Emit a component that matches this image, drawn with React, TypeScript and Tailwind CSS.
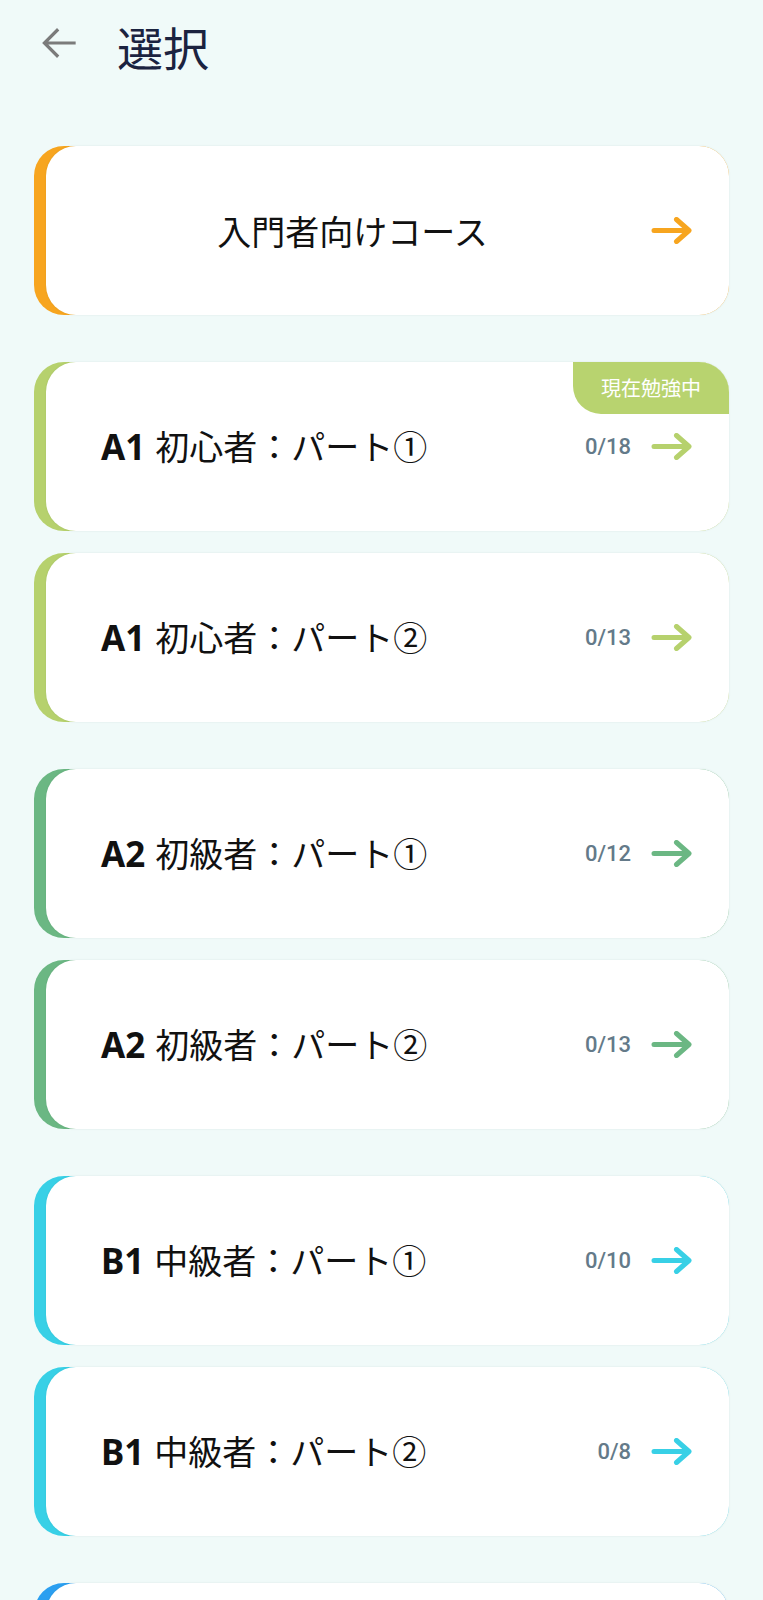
import { ReactNode } from "react";

interface CardProps {
  stripe: string;
  arrow: string;
  title?: ReactNode;
  count?: string;
  badge?: string;
  center?: boolean;
}

function Arrow({ color }: { color: string }) {
  return (
    <svg width="41" height="27" viewBox="0 0 41 27" className={color} fill="none">
      <path
        d="M3 13.5H37M25.5 2.5L38 13.5L25.5 24.5"
        stroke="currentColor"
        strokeWidth="5"
        strokeLinecap="round"
        strokeLinejoin="round"
      />
    </svg>
  );
}

function CourseCard({ stripe, arrow, title, count, badge, center }: CardProps) {
  return (
    <div className={`rounded-[30px] ${stripe}`}>
      <div
        className={`relative ml-[12px] flex h-[169px] items-center rounded-[30px] bg-white pr-[37px] shadow-[0_0_2px_rgba(40,80,70,0.12)] ${
          center ? "pl-[20px]" : "pl-[55px]"
        }`}
      >
        {badge && (
          <div className="absolute right-0 top-0 flex h-[52px] w-[156px] items-center justify-center rounded-bl-[28px] rounded-tr-[30px] bg-[#b8d36f] text-[20px] text-white">
            {badge}
          </div>
        )}
        <div
          className={`flex-1 text-[34px] font-normal leading-none text-[#111] ${
            center ? "mr-[12px] text-center" : ""
          }`}
        >
          {title}
        </div>
        {count && (
          <span className="mr-[20px] font-['Roboto'] text-[22px] font-medium text-[#647a89]">
            {count}
          </span>
        )}
        <Arrow color={arrow} />
      </div>
    </div>
  );
}

function Level({ code, name }: { code: string; name: string }) {
  return (
    <>
      <span className="mr-[10px] font-['Noto_Sans'] text-[35px] font-bold">{code}</span>
      {name}
    </>
  );
}

export default function App() {
  return (
    <div className="min-h-screen bg-[#f0faf9] pb-10 font-['Noto_Sans_CJK_JP',sans-serif]">
      <header className="flex items-start pl-[34px] pt-[18px]">
        <svg width="50" height="50" viewBox="0 0 24 24" className="text-[#7b7b7b]" fill="none">
          <path
            d="M20 12H5.2M11.6 5.4L5 12l6.6 6.6"
            stroke="currentColor"
            strokeWidth="1.55"
          />
        </svg>
        <h1 className="ml-[33px] text-[46px] font-normal leading-[56px] text-[#1b2340]">
          選択
        </h1>
      </header>

      <div className="mx-[34px] mt-[72px] flex flex-col gap-[47px]">
        <CourseCard
          stripe="bg-[#f7a51f]"
          arrow="text-[#f7a51f]"
          title="入門者向けコース"
          center
        />

        <div className="flex flex-col gap-[22px]">
          <CourseCard
            stripe="bg-[#b6d16d]"
            arrow="text-[#b6d16d]"
            title={<Level code="A1" name="初心者：パート①" />}
            count="0/18"
            badge="現在勉強中"
          />
          <CourseCard
            stripe="bg-[#b6d16d]"
            arrow="text-[#b6d16d]"
            title={<Level code="A1" name="初心者：パート②" />}
            count="0/13"
          />
        </div>

        <div className="flex flex-col gap-[22px]">
          <CourseCard
            stripe="bg-[#6bb783]"
            arrow="text-[#6bb783]"
            title={<Level code="A2" name="初級者：パート①" />}
            count="0/12"
          />
          <CourseCard
            stripe="bg-[#6bb783]"
            arrow="text-[#6bb783]"
            title={<Level code="A2" name="初級者：パート②" />}
            count="0/13"
          />
        </div>

        <div className="flex flex-col gap-[22px]">
          <CourseCard
            stripe="bg-[#38d0e6]"
            arrow="text-[#38d0e6]"
            title={<Level code="B1" name="中級者：パート①" />}
            count="0/10"
          />
          <CourseCard
            stripe="bg-[#38d0e6]"
            arrow="text-[#38d0e6]"
            title={<Level code="B1" name="中級者：パート②" />}
            count="0/8"
          />
        </div>

        <CourseCard stripe="bg-[#2b9ff0]" arrow="text-[#2b9ff0]" />
      </div>
    </div>
  );
}
